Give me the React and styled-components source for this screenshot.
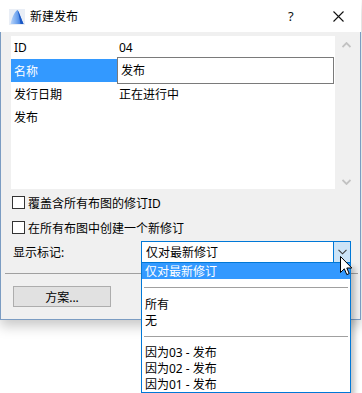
import React from 'react';
import styled, { createGlobalStyle } from 'styled-components';

const GlobalStyle = createGlobalStyle`
  html, body { margin: 0; padding: 0; background: #ffffff; }
  body { font-family: "Noto Sans", "Noto Sans CJK SC", sans-serif; font-size: 12px; color: #000; }
`;

const rows = [
  { key: 'ID', value: '04' },
  { key: '名称', value: '发布', editing: true },
  { key: '发行日期', value: '正在进行中' },
  { key: '发布', value: '' },
];

const options = [
  { label: '仅对最新修订', selected: true },
  { sep: true, tall: true },
  { label: '所有' },
  { label: '无' },
  { sep: true },
  { label: '因为03 - 发布' },
  { label: '因为02 - 发布' },
  { label: '因为01 - 发布' },
];

export default function App() {
  return (
    <Page>
      <GlobalStyle />
      <Window>
        <TitleBar>
          <AppIcon />
          <Title>新建发布</Title>
          <Help>?</Help>
          <Close>
            <svg width="11" height="11" viewBox="0 0 11 11">
              <path d="M0.5 0.5 L10.5 10.5 M10.5 0.5 L0.5 10.5" stroke="#111" strokeWidth="1.1" fill="none" />
            </svg>
          </Close>
        </TitleBar>
        <Body>
          <Panel>
            <PropList>
              {rows.map((r) => (
                <PropRow key={r.key}>
                  <PropKey $active={r.editing}>{r.key}</PropKey>
                  {r.editing ? <EditBox>{r.value}</EditBox> : <PropValue>{r.value}</PropValue>}
                </PropRow>
              ))}
            </PropList>
            <ScrollBar>
              <Chevron up />
              <Chevron />
            </ScrollBar>
          </Panel>
          <CheckRow $first>
            <Box />
            <span>覆盖含所有布图的修订ID</span>
          </CheckRow>
          <CheckRow>
            <Box />
            <span>在所有布图中创建一个新修订</span>
          </CheckRow>
          <FieldRow>
            <FieldLabel>显示标记:</FieldLabel>
            <Combo>
              <ComboText>仅对最新修订</ComboText>
              <ComboButton>
                <svg width="9" height="6" viewBox="0 0 9 6">
                  <path d="M0.5 0.8 L4.5 4.8 L8.5 0.8" stroke="#3d3d3d" strokeWidth="1.1" fill="none" />
                </svg>
              </ComboButton>
            </Combo>
          </FieldRow>
          <Divider />
          <PushButton>方案...</PushButton>
        </Body>
      </Window>
      <DropList>
        {options.map((o, i) =>
          o.sep ? (
            <SepItem key={i} $tall={o.tall}>
              <SepLine />
            </SepItem>
          ) : (
            <Option key={i} $selected={o.selected}>{o.label}</Option>
          )
        )}
      </DropList>
      <Cursor>
        <svg width="13" height="20" viewBox="0 0 13 20">
          <path d="M0.5 0.5 L0.5 16.5 L4.3 12.8 L6.8 18.6 L9.2 17.6 L6.8 12 L11.8 12 Z" fill="#fff" stroke="#000" strokeWidth="1" strokeLinejoin="miter" />
        </svg>
      </Cursor>
    </Page>
  );
}

function AppIcon() {
  return (
    <IconWrap>
      <svg width="16" height="16" viewBox="0 0 16 16">
        <defs>
          <linearGradient id="ac" x1="0" y1="0" x2="1" y2="0">
            <stop offset="0" stopColor="#bcd6fa" />
            <stop offset="0.5" stopColor="#6fa4ee" />
            <stop offset="1" stopColor="#1f63d6" />
          </linearGradient>
        </defs>
        <rect x="0" y="0" width="16" height="16" fill="#e9eef6" />
        <path d="M1.5 15 C3 9 5.5 2.5 8.5 1 C10.5 4 12 9 14.5 15 Z" fill="url(#ac)" />
        <path d="M8.5 1 C10.5 4 12 9 14.5 15 L11.5 15 C10.5 9 9.5 4.5 8.5 1 Z" fill="#1a57c4" />
      </svg>
    </IconWrap>
  );
}

const Page = styled.div`
  position: relative;
  width: 362px;
  height: 393px;
  overflow: hidden;
  background: #ffffff;
`;

const Window = styled.div`
  width: 361px;
  box-sizing: border-box;
  background: #ffffff;
  box-shadow: 0 6px 12px rgba(0, 0, 0, 0.22);
`;

const TitleBar = styled.div`
  height: 32px;
  display: flex;
  align-items: center;
  background: #ffffff;
`;

const IconWrap = styled.div`
  display: flex;
  margin-left: 9px;
  margin-top: 1px;
`;

const Title = styled.div`
  margin-left: 5px;
  font-size: 12px;
  color: #000;
  flex: 1;
`;

const Help = styled.div`
  width: 7px;
  font-size: 13px;
  color: #111;
  margin-right: 38px;
`;

const Close = styled.div`
  display: flex;
  margin-right: 17px;
`;

const Body = styled.div`
  height: 288px;
  box-sizing: border-box;
  background: #f0f0f0;
  border: 1px solid #7b9cc2;
  border-top: none;
  padding: 4px 2px 0 10px;
  display: flex;
  flex-direction: column;
`;

const Panel = styled.div`
  display: flex;
  height: 153px;
`;

const PropList = styled.div`
  width: 324px;
  background: #ffffff;
  display: flex;
  flex-direction: column;
`;

const PropRow = styled.div`
  display: flex;
  align-items: center;
  height: 23px;
`;

const PropKey = styled.div`
  width: 103px;
  height: 23px;
  padding-left: 3px;
  display: flex;
  align-items: center;
  background: ${(p) => (p.$active ? '#3399ff' : 'transparent')};
  color: ${(p) => (p.$active ? '#ffffff' : '#000')};
`;

const PropValue = styled.div`
  padding-left: 2px;
`;

const EditBox = styled.div`
  box-sizing: border-box;
  width: 217px;
  height: 27px;
  margin-top: -1px;
  border: 1px solid #7a7a7a;
  padding-left: 3px;
  display: flex;
  align-items: center;
  background: #ffffff;
`;

const ScrollBar = styled.div`
  flex: 1;
  display: flex;
  flex-direction: column;
  justify-content: space-between;
  align-items: center;
  padding: 6px 0 4px;
`;

const Chevron = ({ up }) => (
  <svg width="9" height="6" viewBox="0 0 9 6">
    <path
      d={up ? 'M0.5 5 L4.5 1 L8.5 5' : 'M0.5 1 L4.5 5 L8.5 1'}
      stroke="#c2c2c2"
      strokeWidth="1.8"
      fill="none"
    />
  </svg>
);

const CheckRow = styled.div`
  display: flex;
  align-items: center;
  height: 25px;
  padding-left: 1px;
  margin-top: ${(p) => (p.$first ? '1px' : '0')};
`;

const Box = styled.div`
  width: 13px;
  height: 13px;
  box-sizing: border-box;
  border: 1px solid #333;
  background: #ffffff;
  margin-right: 3px;
`;

const FieldRow = styled.div`
  display: flex;
  align-items: center;
  height: 22px;
  margin-top: 1px;
`;

const FieldLabel = styled.div`
  width: 128px;
  padding-left: 2px;
  color: #000;
`;

const Combo = styled.div`
  width: 210px;
  height: 22px;
  box-sizing: border-box;
  border: 1px solid #0078d7;
  background: #ffffff;
  display: flex;
`;

const ComboText = styled.div`
  flex: 1;
  display: flex;
  align-items: center;
  padding-left: 4px;
`;

const ComboButton = styled.div`
  width: 16px;
  background: #cce4f7;
  border-left: 1px solid #0078d7;
  display: flex;
  align-items: center;
  justify-content: center;
`;

const Divider = styled.div`
  height: 1px;
  background: #a0a0a0;
  margin: 10px 0 0 -6px;
`;

const PushButton = styled.div`
  margin-top: 12px;
  width: 98px;
  height: 21px;
  box-sizing: border-box;
  margin-left: 2px;
  background: #e1e1e1;
  border: 1px solid #adadad;
  display: flex;
  align-items: center;
  justify-content: center;
`;

const DropList = styled.div`
  position: absolute;
  left: 141px;
  top: 263px;
  width: 210px;
  height: 130px;
  box-sizing: border-box;
  background: #ffffff;
  border: 1px solid #0078d7;
  border-top: none;
  box-shadow: 4px 4px 5px rgba(0, 0, 0, 0.22);
  display: flex;
  flex-direction: column;
`;

const Option = styled.div`
  height: 16px;
  flex-shrink: 0;
  display: flex;
  align-items: center;
  padding-left: 3px;
  background: ${(p) => (p.$selected ? '#3399ff' : 'transparent')};
  color: ${(p) => (p.$selected ? '#ffffff' : '#000')};
`;

const SepItem = styled.div`
  height: ${(p) => (p.$tall ? '17px' : '16px')};
  flex-shrink: 0;
  display: flex;
  align-items: center;
  padding: 0 2px;
`;

const SepLine = styled.div`
  flex: 1;
  height: 1px;
  background: #a0a0a0;
`;

const Cursor = styled.div`
  position: absolute;
  left: 340px;
  top: 256px;
  display: flex;
`;
